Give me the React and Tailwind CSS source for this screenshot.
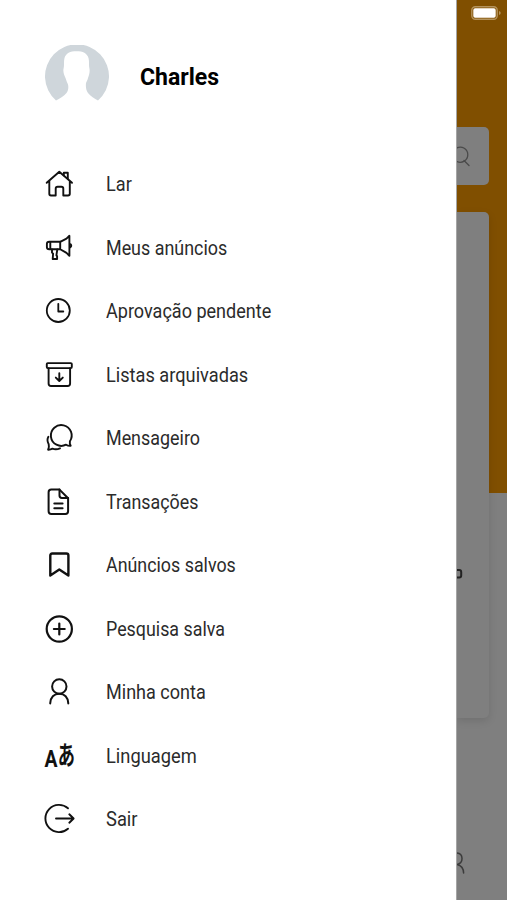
const HomeIcon = () => (
  <>
    <path d="M3.7 14.8 16.3 3.8 29 14.8M6.3 13v12.8q0 1.7 1.7 1.7h4.7v-6.8q0-1.9 1.9-1.9h3.8q1.9 0 1.9 1.9v6.8H25q1.8 0 1.8-1.7V13" />
    <path d="M20.8 7.2V4.7h4v6" />
  </>
);

const MegaphoneIcon = () => (
  <>
    <path d="M17.2 9.8H6.2q-2.3 0-2.3 2v3.4q0 2 2.3 2h11M7.3 9.8v7.4M17.2 9.8v7.4M17.2 9.8l6.3-3.2 2.9-2.8v20l-2.9-2.9-6.3-3.7" />
    <path d="M9 17.4v3.2l1.1 1-.4 5.4h4.4v-2.8l-.7-.9.9-5.9" />
    <path d="M27.5 12.2q1.4 1.5 0 3" />
  </>
);

const ClockIcon = () => (
  <>
    <circle cx="15.3" cy="15.5" r="11.5" />
    <path d="M15.3 8.8v7.7h5" />
  </>
);

const ArchiveIcon = () => (
  <>
    <rect x="3.8" y="4.1" width="25" height="5" rx="1" />
    <path d="M5.6 9.2v15.3q0 2.5 2.5 2.5h16.5q2.5 0 2.5-2.5V9.2" />
    <path d="M16.3 14.3v7.5M12.8 18.6l3.5 3.4 3.5-3.4" />
  </>
);

const ChatIcon = () => (
  <>
    <path d="M27.7 23.8q-2.4.3-4.6-1.1A10.4 10.4 0 1 1 26.9 19.3q-.5 2.4.8 4.5Z" />
    <path d="M5.4 14.8q-2 3.4.3 7.4.7 2.8-.6 5.5 2.4.1 4.4-1 3.6 1.4 7.5-.4" />
  </>
);

const DocumentIcon = () => (
  <>
    <path d="M16.5 3.6H8.3q-2.7 0-2.7 2.7v19q0 2.7 2.7 2.7h14.1q2.7 0 2.7-2.7V12.2Z" />
    <path d="M16.5 3.6v6q0 2.4 2.4 2.4h6.2M11.3 17.4h8.3M11.3 22.2h8.3" />
  </>
);

const BookmarkIcon = () => (
  <path d="M7.3 26.5V6.5q0-2 2-2h14.1q2 0 2 2v20l-9.1-6Z" />
);

const PlusIcon = () => (
  <>
    <circle cx="16.3" cy="16" r="12.6" />
    <path d="M16.3 10.6v10.8M10.9 16h10.8" />
  </>
);

const UserIcon = () => (
  <>
    <circle cx="16.3" cy="10.5" r="7.2" />
    <path d="M7.2 27.4C7.7 21.3 11 17.8 16.3 17.8s8.5 3.5 9 9.6" />
  </>
);

const LanguageIcon = () => (
  <g fill="#111" stroke="none">
    <text x="1.4" y="26.5" fontSize="23.5" fontWeight="700" textLength="13" lengthAdjust="spacingAndGlyphs" fontFamily="Roboto, sans-serif">A</text>
    <text x="14.8" y="25" fontSize="26" fontWeight="700" textLength="17.2" lengthAdjust="spacingAndGlyphs" fontFamily="'Noto Sans CJK JP', sans-serif">あ</text>
  </g>
);

const LogoutIcon = () => (
  <>
    <path d="M25 5.3A13.6 13.6 0 1 0 25 25.7" />
    <path d="M13 15.5h17.3M26.3 11.3l4.3 4.2-4.3 4.2" />
  </>
);

const menuItems = [
  { label: "Lar", Icon: HomeIcon, stroke: 1.9, fit: "scale-x-[0.93]" },
  { label: "Meus anúncios", Icon: MegaphoneIcon, stroke: 1.9, fit: "scale-x-[0.918]" },
  { label: "Aprovação pendente", Icon: ClockIcon, stroke: 1.8, fit: "scale-x-[0.925]" },
  { label: "Listas arquivadas", Icon: ArchiveIcon, stroke: 1.9, fit: "scale-x-[0.933]" },
  { label: "Mensageiro", Icon: ChatIcon, stroke: 1.9, fit: "scale-x-[0.918]" },
  { label: "Transações", Icon: DocumentIcon, stroke: 2, fit: "scale-x-[0.915]" },
  { label: "Anúncios salvos", Icon: BookmarkIcon, stroke: 2.4, fit: "scale-x-[0.915]" },
  { label: "Pesquisa salva", Icon: PlusIcon, stroke: 2.2, fit: "scale-x-[0.915]" },
  { label: "Minha conta", Icon: UserIcon, stroke: 2, fit: "scale-x-[0.925]" },
  { label: "Linguagem", Icon: LanguageIcon, stroke: 2, fit: "scale-x-[0.938]" },
  { label: "Sair", Icon: LogoutIcon, stroke: 1.9, fit: "scale-x-[0.94]" },
];

const Avatar = () => (
  <svg viewBox="0 0 64 64" className="size-16">
    <path
      fill="#cfd6db"
      d="M11 55.5A32 32 0 1 1 53 55.5C49.5 53.3 45.5 51.5 43 48 41 45 40.600 42 41 38 42 36 42.700 34.500 43 33 44 30 45 27 44.500 24 43.500 20 44.500 17 43.500 13 42 8 38 6.200 31.500 6.200S21 8 19.500 13C18.500 17 19.500 20 18.500 24 18 27 19 30 20.500 33 21.200 35.500 22.500 38 23 39.500 23.700 42.500 23.300 45.500 21.500 48 19 51.500 14.500 53.300 11 55.500Z"
    />
  </svg>
);

const Drawer = () => (
  <aside className="w-[456px] shrink-0 bg-white pl-[43px] pt-11">
    <div className="flex h-[66px] items-center gap-[31px] pl-0.5">
      <Avatar />
      <h1 className="origin-left scale-x-[0.98] pt-0.5 text-[23.5px] font-bold text-black">Charles</h1>
    </div>
    <nav className="pt-[42.5px]">
      <ul>
        {menuItems.map(({ label, Icon, stroke, fit }) => (
          <li key={label} className="flex h-[63.5px] items-center gap-[31px] text-[19.5px] text-[#2b2b2b]">
            <svg
              viewBox="0 0 32 32"
              className="size-8 shrink-0 overflow-visible"
              fill="none"
              stroke="#111"
              strokeWidth={stroke}
              strokeLinecap="round"
              strokeLinejoin="round"
            >
              <Icon />
            </svg>
            <span className={`origin-left whitespace-nowrap pt-px ${fit}`}>{label}</span>
          </li>
        ))}
      </ul>
    </nav>
  </aside>
);

// dimmed strip of the home screen beside the open drawer
const Backdrop = () => (
  <main className="flex flex-1 flex-col overflow-hidden border-l border-[#a5a5a5] bg-[#7f7f7f]">
    <section className="h-[493px] shrink-0 bg-[#804f00]">
      <div className="h-[127px] pl-3.5 pt-[6px]">
        <svg viewBox="0 0 31 14" className="h-3.5 w-[31px]">
          <rect x="0.8" y="0.8" width="25.4" height="12.4" rx="3.5" fill="none" stroke="#b4935c" strokeWidth="1.4" />
          <rect x="2.3" y="2.3" width="22.4" height="9.4" rx="1.8" fill="#fff" />
          <path d="M28 5v4q1.7-.5 1.7-2T28 5Z" fill="#b4935c" />
        </svg>
      </div>
      <div className="flex h-[58px] w-8 items-center overflow-hidden rounded-r-[5px] bg-[#7f7f7f]">
        <svg viewBox="0 0 14 22" className="h-[22px] w-3.5" fill="none" stroke="#4a4a4a" strokeWidth="1.3" strokeLinecap="round">
          <path d="M0 2.8A7.6 7.6 0 1 1 0 16.600M7 15.500l5 5" />
        </svg>
      </div>
      <div className="mt-[27px] h-[506px] w-8 rounded-r-[5px] bg-[#7f7f7f] pt-[349px] shadow-[0_3px_8px_rgba(0,0,0,0.12)]">
        <svg viewBox="0 0 6 24" className="h-6 w-1.5" fill="none" stroke="#222" strokeWidth="2">
          <path d="M0 9h2.2q2 0 2 2v3.5q0 2-2 2H0" />
        </svg>
      </div>
    </section>
    <div className="mt-auto h-[50px]">
      <svg viewBox="0 0 8 24" className="h-6 w-2" fill="none" stroke="#3b3b3b" strokeWidth="1.5" strokeLinecap="round">
        <path d="M0 3q4.8.3 5 5.3T0 14.500Q6.500 16 6.600 23" />
      </svg>
    </div>
  </main>
);

export default function App() {
  return (
    <div className="flex h-[900px] w-[507px] overflow-hidden bg-white font-['Roboto',sans-serif]">
      <Drawer />
      <Backdrop />
    </div>
  );
}
